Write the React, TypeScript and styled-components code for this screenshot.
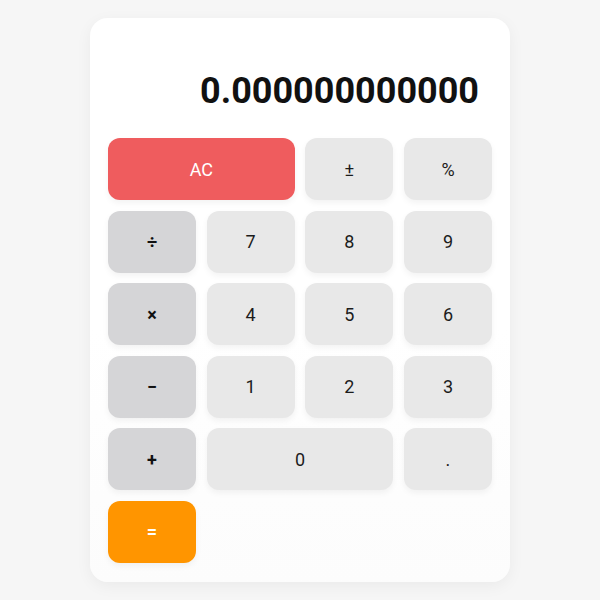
import React, { useState } from "react";
import styled, { createGlobalStyle } from "styled-components";

const GlobalStyle = createGlobalStyle`
  html, body {
    margin: 0;
    padding: 0;
    background: #f6f6f6;
    font-family: Roboto, "Liberation Sans", sans-serif;
  }
`;

const Page = styled.div`
  width: 600px;
  height: 600px;
  display: flex;
  justify-content: center;
  padding-top: 18px;
  box-sizing: border-box;
`;

const Card = styled.div`
  width: 420px;
  height: 564px;
  box-sizing: border-box;
  padding: 18px;
  border-radius: 18px;
  background: linear-gradient(#ffffff 0%, #ffffff 55%, #fcfcfc 100%);
  box-shadow: 0 4px 16px rgba(0, 0, 0, 0.05);
  display: flex;
  flex-direction: column;
`;

const Display = styled.div`
  height: 92px;
  margin-bottom: 10px;
  padding: 0 13px 15px 0;
  box-sizing: border-box;
  display: flex;
  align-items: flex-end;
  justify-content: flex-end;
  font-size: 36px;
  font-weight: 700;
  line-height: 1.2;
  color: #111;
`;

const Keys = styled.div`
  display: grid;
  grid-template-columns: repeat(4, 1fr);
  grid-auto-rows: 62px;
  column-gap: 10.6px;
  row-gap: 10.6px;
`;

type Kind = "num" | "op" | "clear" | "equals";

const palette: Record<Kind, { bg: string; fg: string; weight: number }> = {
  num: { bg: "#e8e8e8", fg: "#1c1c1c", weight: 400 },
  op: { bg: "#d5d5d7", fg: "#111", weight: 700 },
  clear: { bg: "#ef5c5e", fg: "#ffffff", weight: 400 },
  equals: { bg: "#ff9500", fg: "#ffffff", weight: 700 },
};

const Key = styled.button<{ $kind: Kind; $span?: number }>`
  grid-column: span ${(p) => p.$span ?? 1};
  border: none;
  border-radius: 12px;
  background: ${(p) => palette[p.$kind].bg};
  color: ${(p) => palette[p.$kind].fg};
  font-family: Roboto, "Liberation Sans", sans-serif;
  font-size: 18px;
  font-weight: ${(p) => palette[p.$kind].weight};
  box-shadow: 0 3px 6px rgba(0, 0, 0, 0.05);
  cursor: pointer;
  padding: 0;
`;

const layout: { label: string; kind: Kind; span?: number }[] = [
  { label: "AC", kind: "clear", span: 2 },
  { label: "±", kind: "num" },
  { label: "%", kind: "num" },
  { label: "÷", kind: "op" },
  { label: "7", kind: "num" },
  { label: "8", kind: "num" },
  { label: "9", kind: "num" },
  { label: "×", kind: "op" },
  { label: "4", kind: "num" },
  { label: "5", kind: "num" },
  { label: "6", kind: "num" },
  { label: "−", kind: "op" },
  { label: "1", kind: "num" },
  { label: "2", kind: "num" },
  { label: "3", kind: "num" },
  { label: "+", kind: "op" },
  { label: "0", kind: "num", span: 2 },
  { label: ".", kind: "num" },
  { label: "=", kind: "equals" },
];

export default function App() {
  const [value] = useState("0.000000000000");

  return (
    <>
      <GlobalStyle />
      <Page>
        <Card>
          <Display>{value}</Display>
          <Keys>
            {layout.map((k) => (
              <Key key={k.label} $kind={k.kind} $span={k.span}>
                {k.label}
              </Key>
            ))}
          </Keys>
        </Card>
      </Page>
    </>
  );
}
